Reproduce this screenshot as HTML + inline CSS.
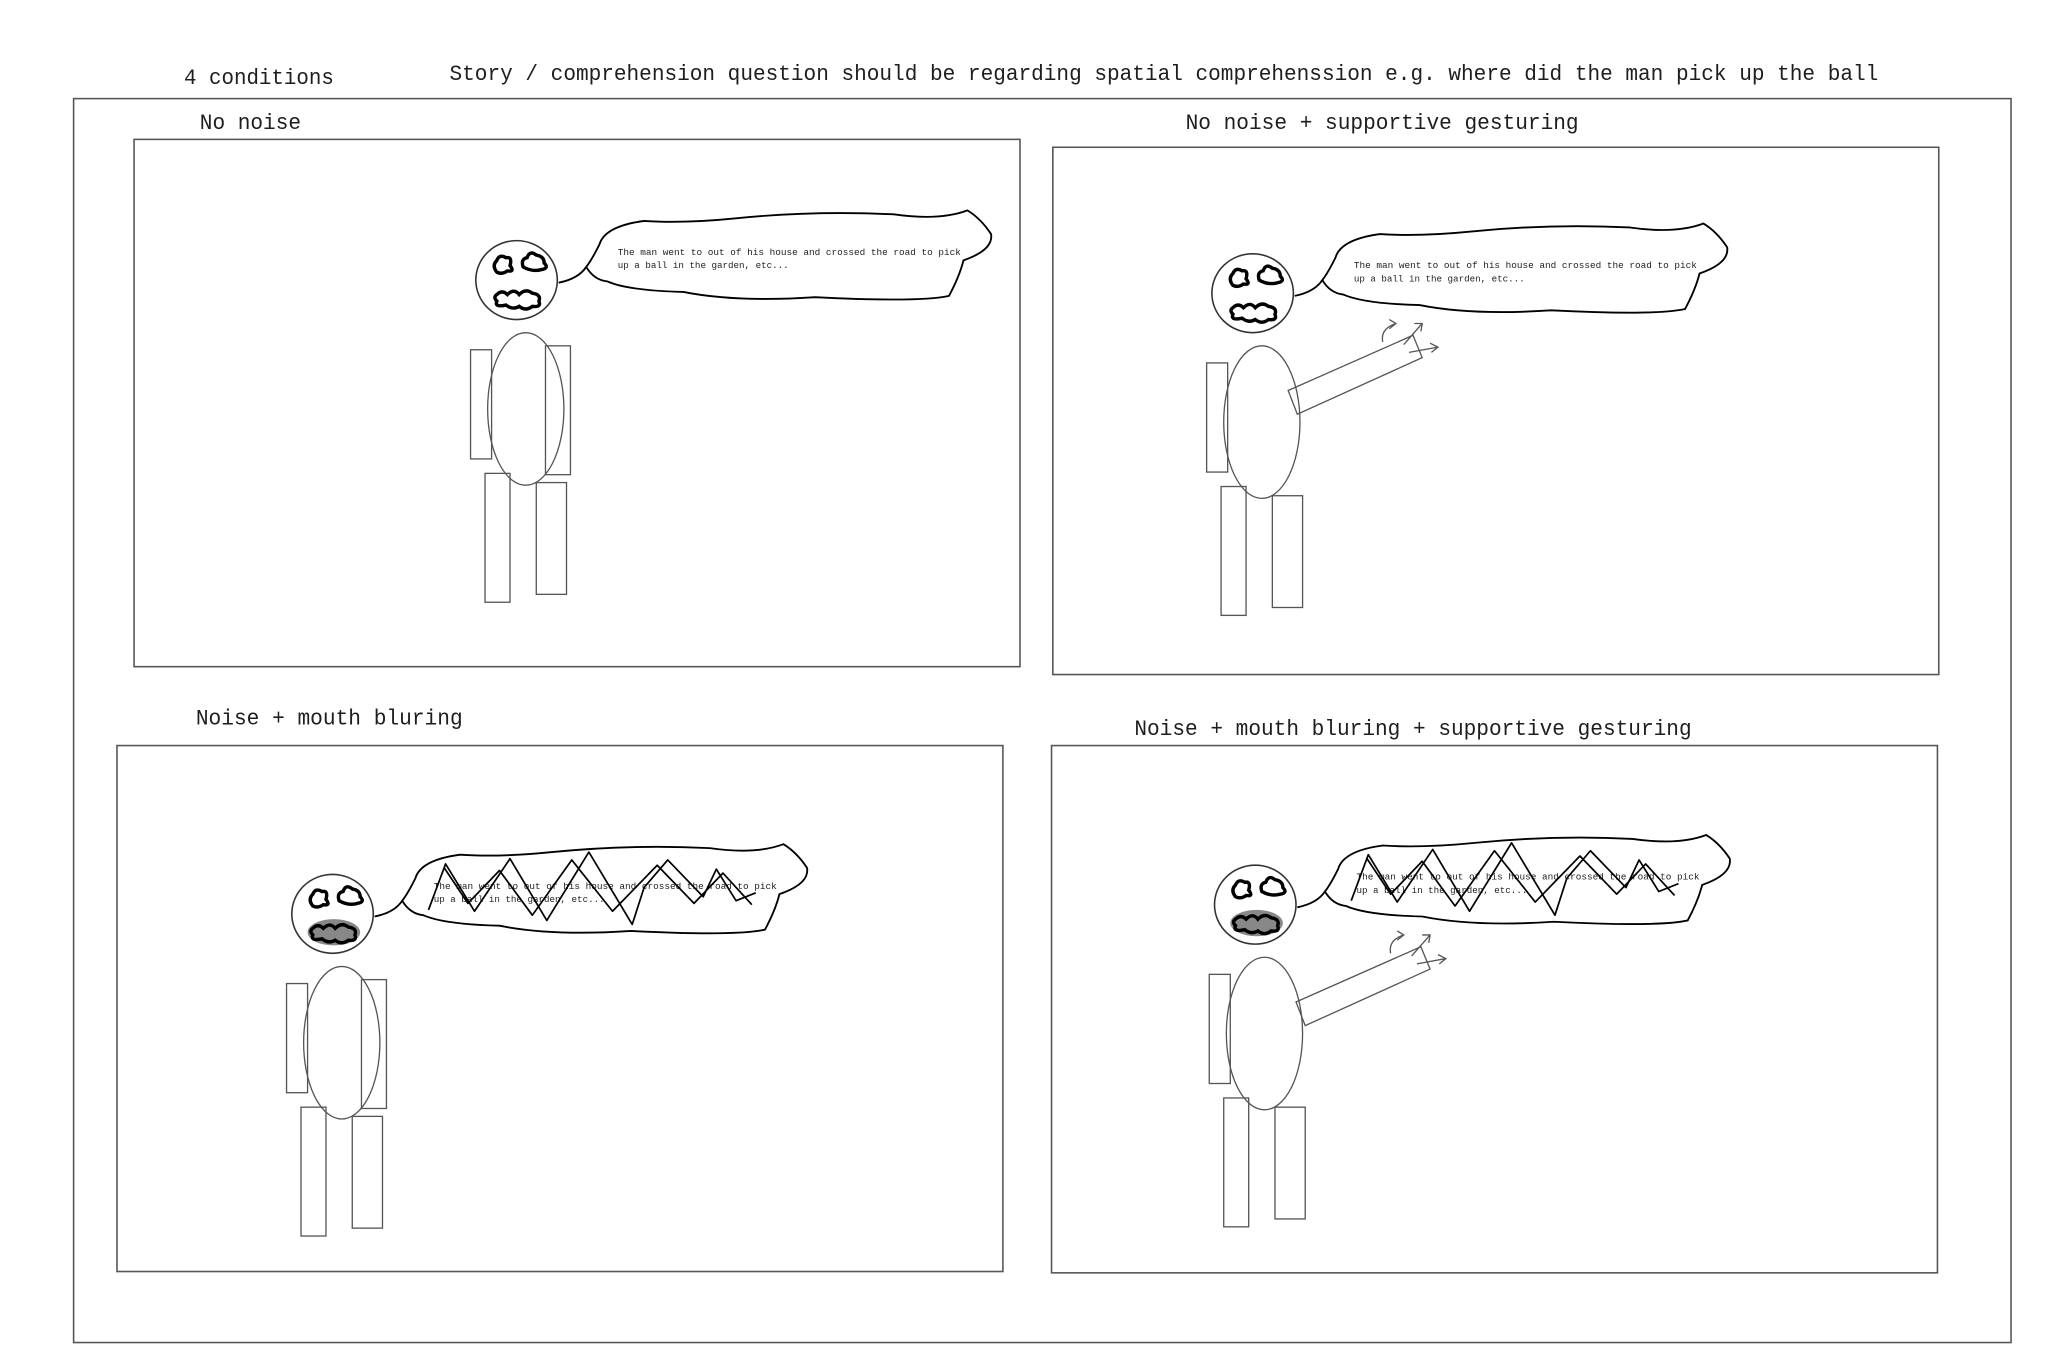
<!DOCTYPE html>
<html><head><meta charset="utf-8"><style>
html,body{margin:0;padding:0;background:#fff;}
svg{display:block;}
text{font-family:"Liberation Mono","DejaVu Sans Mono",monospace;fill:#1e1e1e;}
</style></head><body>
<svg width="2061" height="1357" viewBox="0 0 1568 1032" preserveAspectRatio="none" xmlns="http://www.w3.org/2000/svg">
<defs>
<g id="head">
  <ellipse cx="393" cy="213" rx="31" ry="30" fill="none" stroke="#333" stroke-width="1.2"/>
  <path d="M378,207 Q374,202 378,198 Q380,193 385,196 Q390,195 388,202 Q392,207 386,206 Q382,209 378,207Z" fill="none" stroke="#000" stroke-width="2.6"/>
  <path d="M398,203 Q396,197 401,196 Q403,190 408,194 Q414,195 414,200 Q418,204 412,205 Q405,207 398,203Z" fill="none" stroke="#000" stroke-width="2.6"/>
  <path d="M378,224 Q382,220 386,224 Q391,219 395,224 Q400,219 405,223 Q412,224 410,229 Q412,234 405,233 Q400,237 395,233 Q390,236 385,232 Q376,234 378,229 Q375,226 378,224Z" fill="none" stroke="#000" stroke-width="2.6"/>
</g>
<g id="bubble">
  <path d="M425,215 Q440,212 446,203 Q452,213 462,214 Q478,221 520,222 Q560,230 620,226 Q700,230 722,225 Q730,210 733,198 Q756,190 754,178 Q746,166 736,160 Q715,168 680,163 Q620,160 560,166 Q520,170 490,168 Q460,172 456,186 Q450,198 446,203" fill="none" stroke="#000" stroke-width="1.4"/>
  <text x="470" y="194" font-size="7" textLength="261" lengthAdjust="spacingAndGlyphs">The man went to out of his house and crossed the road to pick</text>
  <text x="470" y="204" font-size="7" textLength="130" lengthAdjust="spacingAndGlyphs">up a ball in the garden, etc...</text>
</g>
<g id="bodyleg">
  <ellipse cx="400" cy="311" rx="29" ry="58" fill="none" stroke="#555" stroke-width="1"/>
  <rect x="358" y="266" width="16" height="83" fill="none" stroke="#555" stroke-width="1"/>
  <rect x="369" y="360" width="19" height="98" fill="none" stroke="#555" stroke-width="1"/>
  <rect x="408" y="367" width="23" height="85" fill="none" stroke="#555" stroke-width="1"/>
</g>
<g id="arm">
  <polygon points="980,297 1075,255 1082,272 987,315" fill="none" stroke="#555" stroke-width="1"/>
  <path d="M1052,260 Q1050,250 1062,246 M1057,243 L1062,246 L1057,250 M1068,262 L1082,246 M1076,246 L1082,246 L1081,252 M1072,268 L1094,264 M1088,261 L1094,264 L1089,268" fill="none" stroke="#555" stroke-width="1"/>
</g>
<g id="noise">
  <polyline points="466,210 479,175 501,211 528,171 556,218 588,166 621,221 630,193 648,172 675,200 685,179 700,203 715,197" fill="none" stroke="#000" stroke-width="1.3" stroke-linejoin="round"/>
  <polyline points="478,178 496,205 520,180 545,214 575,172 606,211 640,176 668,205 690,182 712,206" fill="none" stroke="#000" stroke-width="1.3" stroke-linejoin="round"/>
</g>
</defs>

<text x="140" y="64" font-size="17" textLength="114" lengthAdjust="spacingAndGlyphs">4 conditions</text>
<text x="342" y="61" font-size="17" textLength="1087" lengthAdjust="spacingAndGlyphs">Story / comprehension question should be regarding spatial comprehenssion e.g. where did the man pick up the ball</text>

<rect x="56" y="75" width="1474" height="946" fill="none" stroke="#555" stroke-width="1.2"/>

<text x="152" y="98" font-size="17" textLength="77" lengthAdjust="spacingAndGlyphs">No noise</text>
<rect x="102" y="106" width="674" height="401" fill="none" stroke="#555" stroke-width="1.2"/>
<text x="902" y="98" font-size="17" textLength="299" lengthAdjust="spacingAndGlyphs">No noise + supportive gesturing</text>
<rect x="801" y="112" width="674" height="401" fill="none" stroke="#555" stroke-width="1.2"/>
<text x="149" y="551" font-size="17" textLength="203" lengthAdjust="spacingAndGlyphs">Noise + mouth bluring</text>
<rect x="89" y="567" width="674" height="400" fill="none" stroke="#555" stroke-width="1.2"/>
<text x="863" y="559" font-size="17" textLength="424" lengthAdjust="spacingAndGlyphs">Noise + mouth bluring + supportive gesturing</text>
<rect x="800" y="567" width="674" height="401" fill="none" stroke="#555" stroke-width="1.2"/>

<use href="#head"/><use href="#bubble"/><use href="#bodyleg"/>
<rect x="415" y="263" width="19" height="98" fill="none" stroke="#555" stroke-width="1"/>

<g transform="translate(560,10)"><use href="#head"/><use href="#bubble"/><use href="#bodyleg"/></g>
<use href="#arm"/>

<g transform="translate(-140,482)">
  <ellipse cx="394" cy="227" rx="20" ry="10" fill="#888"/>
  <use href="#head"/><use href="#bubble"/><use href="#bodyleg"/>
  <rect x="415" y="263" width="19" height="98" fill="none" stroke="#555" stroke-width="1"/>
  <use href="#noise"/>
</g>

<g transform="translate(562,475)">
  <ellipse cx="394" cy="227" rx="20" ry="10" fill="#888"/>
  <use href="#head"/><use href="#bubble"/><use href="#bodyleg"/>
  <use href="#noise"/>
</g>
<g transform="translate(6,465)"><use href="#arm"/></g>
</svg>
</body></html>
